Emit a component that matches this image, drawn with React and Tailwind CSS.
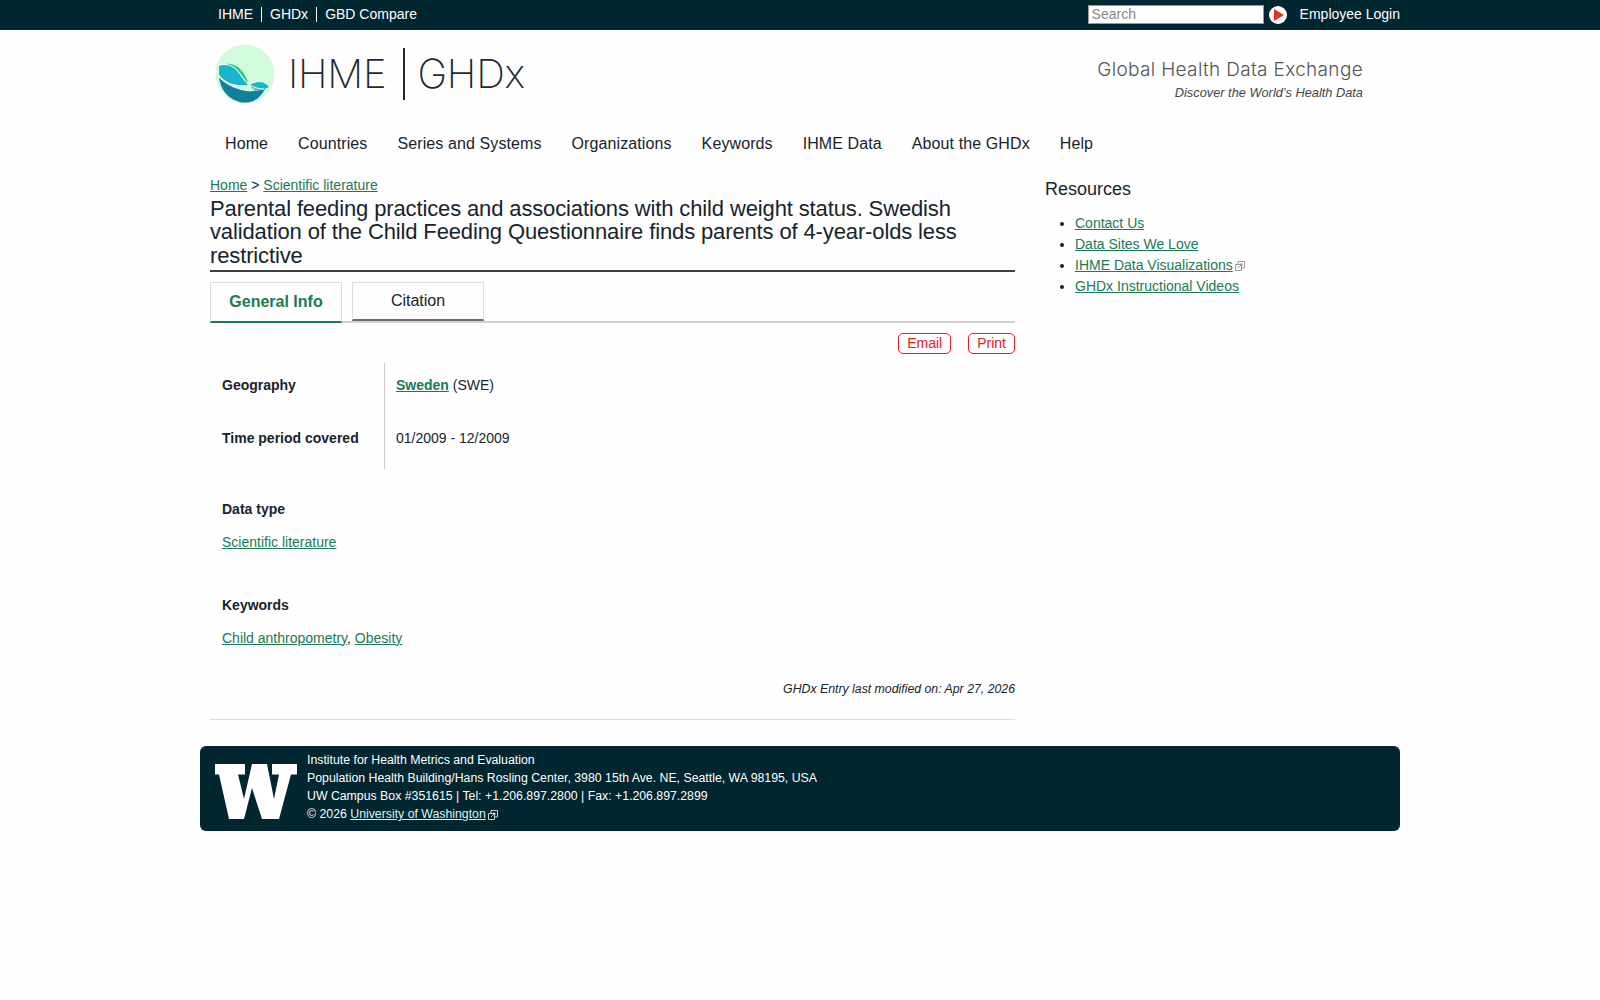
const font = { fontFamily: '"Liberation Sans", Arial, sans-serif' };

const navLinks = ['Home', 'Countries', 'Series and Systems', 'Organizations', 'Keywords', 'IHME Data', 'About the GHDx', 'Help'];

function ExternalIcon({ className }) {
  return (
    <svg viewBox="0 0 10 10" className={className} fill="none" stroke="currentColor" strokeWidth="1">
      <path d="M0.5 3.5h6v6h-6z" />
      <path d="M3 3V0.5h6.5V7H7" />
      <path d="M3 7l4-4M5 3h2v2" />
    </svg>
  );
}

function Logo() {
  return (
    <svg viewBox="0 0 60 60" className="h-[60px] w-[60px] shrink-0">
      <circle cx="30" cy="30" r="29.5" fill="#d2fbdc" />
      <path d="M4 33c8 8 20 13 34 14 4 0 8-1 12-2-3 6-7 10-12 12-5 2-11 2-16 0C12 54 5 44 4 33z" fill="#107f9c" />
      <path d="M4 22c5-2 11-1 16 3 5 4 8 11 13 16-10 1-17-1-22-4-3-2-6-4-7-7z" fill="#18b6cc" />
      <path d="M10 20c9-1 17 3 23 18l-2 1c-3-7-10-15-21-19z" fill="#2cc38a" />
      <path d="M35 40c4-2 9-3 12-2 3 1 5 3 7 5-4 2-10 4-16 3-1-2-2-4-3-6z" fill="#18b6cc" />
      <path d="M4 21c6-2 13 0 18 5 4 4 7 11 12 14 4 3 8 5 15 5M3 32c7 8 19 14 33 15M35 40c4-2 9-3 12-2M36 47l5-4" fill="none" stroke="#fff" strokeWidth="1" />
    </svg>
  );
}

function UwLogo() {
  return (
    <svg viewBox="0 0 82 55" className="mt-[6px] h-[55px] w-[82px] shrink-0" fill="#fff">
      <path d="M0 0H30V10.5H23L29 35L37 0H52L59 35L64 10.5H57V0H82V10.5H76L64 55H47L37 24L29 55H14L4 10.5H0Z" />
    </svg>
  );
}

export default function App() {
  return (
    <div style={font} className="min-h-[1000px] bg-[#fefefe] text-[#17242c]">
      <div className="h-[30px] bg-[#00262f] text-[14px] text-white">
        <div className="mx-auto flex h-full w-[1200px] items-center justify-between pb-[1px] pl-[18px]">
          <div className="flex items-center">
            <a className="pr-2 leading-[15px]">IHME</a>
            <a className="border-l border-white px-2 leading-[15px]">GHDx</a>
            <a className="border-l border-white pl-2 leading-[15px]">GBD Compare</a>
          </div>
          <div className="flex items-center">
            <input
              placeholder="Search"
              className="h-[19px] w-[176px] border border-[#999] bg-white px-[3px] text-[14px] text-[#555] placeholder:text-[#888]"
            />
            <svg viewBox="0 0 18 18" className="ml-[5px] h-[18px] w-[18px]">
              <circle cx="9" cy="9" r="9" fill="#fff" />
              <path d="M5 3l10 6-10 6z" fill="#e8301c" />
            </svg>
            <a className="ml-[13px]">Employee Login</a>
          </div>
        </div>
      </div>

      <div className="mx-auto w-[1200px] pl-[15px] pr-[37px] pt-[14px]">
        <div className="flex items-center justify-between">
          <div className="flex items-center">
            <Logo />
            <span style={{ fontFamily: 'Inter, sans-serif' }} className="ml-[13px] text-[40px] font-extralight leading-none tracking-[-0.2px] text-[#1c2a33]">IHME</span>
            <span className="ml-[17px] h-[52px] w-[2px] bg-[#1c2a33]" />
            <span style={{ fontFamily: 'Inter, sans-serif' }} className="ml-[12px] text-[40px] font-extralight leading-none tracking-[-0.2px] text-[#1c2a33]">GHDx</span>
          </div>
          <div className="pt-[10px] text-right">
            <div style={{ fontFamily: 'Inter, sans-serif' }} className="text-[19px] font-light leading-[24px] tracking-[0.33px] text-[#555]">Global Health Data Exchange</div>
            <div className="mt-[3px] text-[12.8px] italic leading-[16px] text-[#444]">Discover the World’s Health Data</div>
          </div>
        </div>
      </div>

      <div className="mx-auto w-[1200px] pl-[10px]">
        <nav className="mt-[20px] flex h-[40px] items-center text-[16px] tracking-[0.1px]">
          {navLinks.map((l) => (
            <a key={l} className="px-[15px]">{l}</a>
          ))}
        </nav>

        <div className="mt-[11px] flex">
          <main className="w-[805px] shrink-0">
            <div className="text-[14px] leading-[20px]">
              <a className="text-[#1a7a54] underline">Home</a> &gt; <a className="text-[#1a7a54] underline">Scientific literature</a>
            </div>
            <h1 className="mt-[1.5px] border-b-2 border-[#3f3f3f] pb-[2.5px] text-[22px] font-normal leading-[23.5px] tracking-[-0.13px]">
              Parental feeding practices and associations with child weight status. Swedish validation of the Child Feeding Questionnaire finds parents of 4-year-olds less restrictive
            </h1>

            <div className="mt-[10px] flex h-[41px] gap-[10px] border-b-2 border-[#d0d0d0] text-[16px]">
              <div className="-mb-[2px] flex h-[41px] w-[132px] items-center justify-center border-x border-t border-b-2 border-x-[#dcdcdc] border-t-[#dcdcdc] border-b-[#1a7a54] font-bold text-[#1a7a54]">General Info</div>
              <div className="flex h-[39px] w-[132px] items-center justify-center border-x border-t border-b-2 border-x-[#dcdcdc] border-t-[#dcdcdc] border-b-[#666c72]">Citation</div>
            </div>

            <div className="mt-[10px] flex justify-end gap-[17px] text-[14px] text-[#e0201c]">
              <a className="flex h-[21px] items-center rounded-[5px] border border-[#e0201c] px-2">Email</a>
              <a className="flex h-[21px] items-center rounded-[5px] border border-[#e0201c] px-2">Print</a>
            </div>

            <div className="mt-[9px] text-[14px]">
              <div className="grid grid-cols-[175px_1fr]">
                <div className="flex h-[53px] items-center border-r border-[#ccc] pb-[8px] pl-3 font-bold">Geography</div>
                <div className="flex h-[53px] items-center pb-[8px] pl-[11px]">
                  <a className="font-bold text-[#1a7a54] underline">Sweden</a>&nbsp;(SWE)
                </div>
                <div className="flex h-[53px] items-center border-r border-[#ccc] pb-[8px] pl-3 font-bold">Time period covered</div>
                <div className="flex h-[53px] items-center pb-[8px] pl-[11px]">01/2009 - 12/2009</div>
              </div>

              <div className="mt-[30px] pl-3 leading-[20px]">
                <div className="font-bold">Data type</div>
                <div className="mt-[13px]"><a className="text-[#1a7a54] underline">Scientific literature</a></div>
                <div className="mt-[43px] font-bold">Keywords</div>
                <div className="mt-[13px]">
                  <a className="text-[#1a7a54] underline">Child anthropometry</a>, <a className="text-[#1a7a54] underline">Obesity</a>
                </div>
              </div>
            </div>

            <div className="mt-[31px] text-right text-[12.3px] italic leading-[20px]">GHDx Entry last modified on: Apr 27, 2026</div>
            <hr className="mt-[20px] border-[#ddd]" />
          </main>

          <aside className="ml-[30px] pt-[2px] text-[14px]">
            <h2 className="text-[18px] font-normal leading-[24px]">Resources</h2>
            <ul className="mt-[12px] list-disc pl-[30px] leading-[21px]">
              <li><a className="text-[#1a7a54] underline">Contact Us</a></li>
              <li><a className="text-[#1a7a54] underline">Data Sites We Love</a></li>
              <li>
                <a className="text-[#1a7a54] underline">IHME Data Visualizations</a>
                <ExternalIcon className="ml-[2px] inline h-[10px] w-[10px] text-[#999]" />
              </li>
              <li><a className="text-[#1a7a54] underline">GHDx Instructional Videos</a></li>
            </ul>
          </aside>
        </div>
      </div>

      <footer className="mx-auto mt-[26px] flex h-[85px] w-[1200px] items-center rounded-[6px] bg-[#00262f] pl-[15px] text-[12.3px] leading-[18px] text-white">
        <UwLogo />
        <div className="mb-[2px] ml-[10px]">
          <div>Institute for Health Metrics and Evaluation</div>
          <div>Population Health Building/Hans Rosling Center, 3980 15th Ave. NE, Seattle, WA 98195, USA</div>
          <div>UW Campus Box #351615 | Tel: +1.206.897.2800 | Fax: +1.206.897.2899</div>
          <div>
            © 2026 <a className="text-[#d5f7f2] underline">University of Washington</a>
            <ExternalIcon className="ml-[2px] inline h-[10px] w-[10px] text-[#ccc]" />
          </div>
        </div>
      </footer>
    </div>
  );
}
